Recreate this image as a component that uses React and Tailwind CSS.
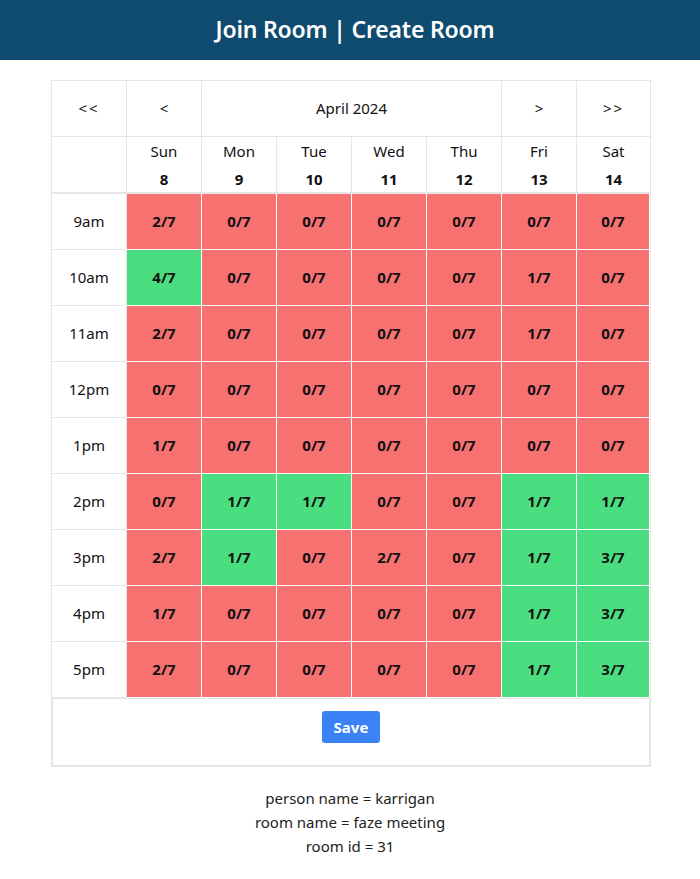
import React from "react";

const days = [
  ["Sun", 8],
  ["Mon", 9],
  ["Tue", 10],
  ["Wed", 11],
  ["Thu", 12],
  ["Fri", 13],
  ["Sat", 14],
];

// value, green?
const rows = [
  ["9am", [[2], [0], [0], [0], [0], [0], [0]]],
  ["10am", [[4, 1], [0], [0], [0], [0], [1], [0]]],
  ["11am", [[2], [0], [0], [0], [0], [1], [0]]],
  ["12pm", [[0], [0], [0], [0], [0], [0], [0]]],
  ["1pm", [[1], [0], [0], [0], [0], [0], [0]]],
  ["2pm", [[0], [1, 1], [1, 1], [0], [0], [1, 1], [1, 1]]],
  ["3pm", [[2], [1, 1], [0], [2], [0], [1, 1], [3, 1]]],
  ["4pm", [[1], [0], [0], [0], [0], [1, 1], [3, 1]]],
  ["5pm", [[2], [0], [0], [0], [0], [1, 1], [3, 1]]],
];

export default function App() {
  return (
    <div className="min-h-screen bg-white text-[#111] font-['Noto_Sans',sans-serif]">
      <header className="h-[60px] bg-[#0e4b6e] flex items-center justify-center pl-[10px]">
        <h1 className="text-white text-[23px] font-semibold tracking-[-0.2px] pb-[1px]">
          Join Room | Create Room
        </h1>
      </header>

      <div className="pl-[2px]">
        <div className="mx-auto mt-5 w-[600px]">
          <div className="border border-[#e5e5e5]">
            <div className="grid grid-cols-[75px_75px_300px_75px_1fr] h-[56px] border-b border-[#e5e5e5] text-[15px]">
              <div className="flex items-center justify-center border-r border-[#e5e5e5] tracking-[2px]">&lt;&lt;</div>
              <div className="flex items-center justify-center border-r border-[#e5e5e5]">&lt;</div>
              <div className="flex items-center justify-center border-r border-[#e5e5e5]">April 2024</div>
              <div className="flex items-center justify-center border-r border-[#e5e5e5]">&gt;</div>
              <div className="flex items-center justify-center tracking-[2px]">&gt;&gt;</div>
            </div>
            <div className="grid grid-cols-[75px_75px_75px_75px_75px_75px_75px_1fr] h-[57px] border-b-2 border-[#e5e5e5]">
              <div className="border-r border-[#e5e5e5]"></div>
              {days.map(([d, n], i) => (
                <div
                  key={d}
                  className={`flex flex-col items-center pt-[4px] ${i < 6 ? "border-r border-[#e5e5e5]" : ""}`}
                >
                  <span className="text-[15px] leading-[20px]">{d}</span>
                  <span className="text-[15px] leading-[20px] mt-[8px] font-bold">{n}</span>
                </div>
              ))}
            </div>
            {rows.map(([label, cells]) => (
              <div key={label} className="grid grid-cols-[75px_75px_75px_75px_75px_75px_75px_1fr] h-[56px]">
                <div className="flex items-center justify-center text-[15px] border-r border-b border-[#e5e5e5]">
                  {label}
                </div>
                {cells.map(([v, g], i) => (
                  <div
                    key={i}
                    className={`flex items-center justify-center text-[15px] font-bold border-r border-b border-white ${
                      g ? "bg-[#4ade80]" : "bg-[#f87171]"
                    }`}
                  >
                    {v}/7
                  </div>
                ))}
              </div>
            ))}
          </div>
          <div className="h-[68px] border-2 border-t-0 border-[#e5e5e5] flex items-start justify-center pt-[12px]">
            <button className="bg-[#3b82f6] text-white font-bold text-[15px] rounded-[3px] w-[58px] h-[32px]">
              Save
            </button>
          </div>
        </div>
      </div>

      <div className="mt-[19px] text-center text-[15px] leading-[24px] text-[#222]">
        <div>person name = karrigan</div>
        <div>room name = faze meeting</div>
        <div>room id = 31</div>
      </div>
    </div>
  );
}
